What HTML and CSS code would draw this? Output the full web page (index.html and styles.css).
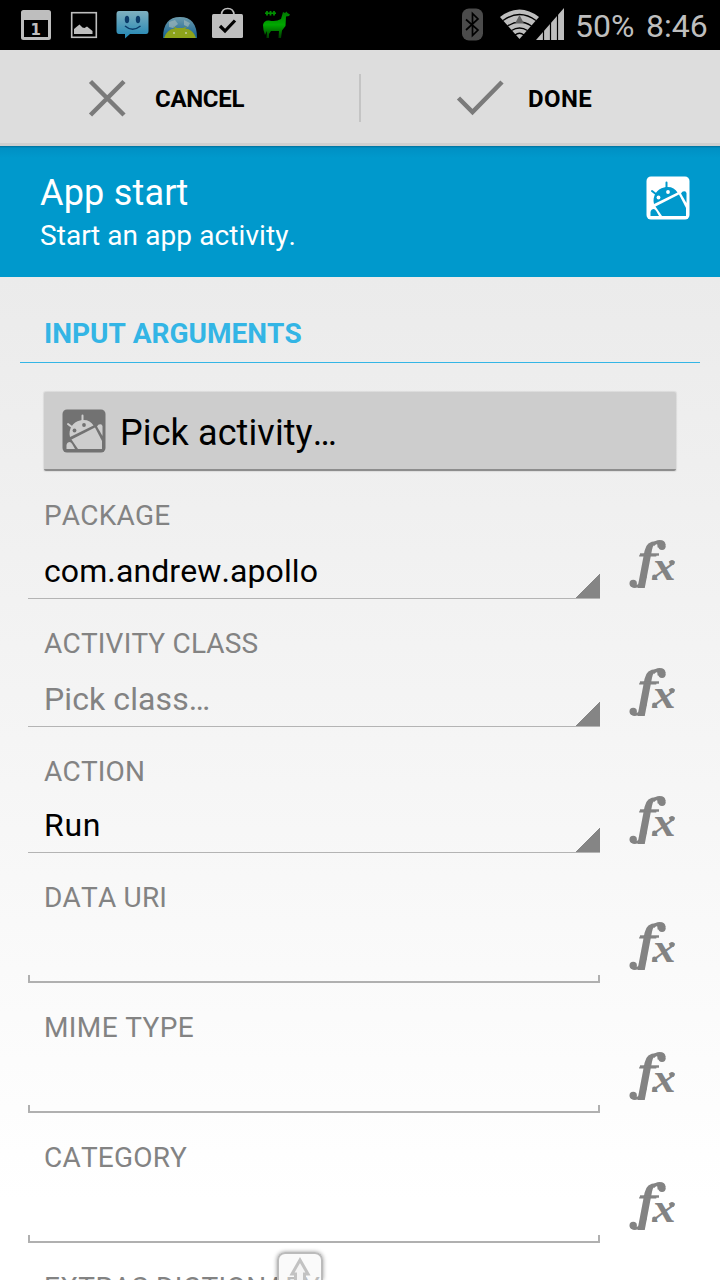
FILE: index.html
```
<!DOCTYPE html>
<html lang="en">
<head>
  <meta charset="UTF-8">
  <meta name="viewport" content="width=device-width, initial-scale=1">
  <title>App start</title>
  <link rel="stylesheet" href="styles.css">
</head>
<body>
  <svg width="0" height="0" class="defs">
    <defs>
      <linearGradient id="smileBlue" x1="0" y1="0" x2="0" y2="1">
        <stop offset="0" stop-color="#7fb0bf"/>
        <stop offset="1" stop-color="#2086b4"/>
      </linearGradient>
      <linearGradient id="llamaGreen" x1="0" y1="0" x2="0" y2="1">
        <stop offset="0" stop-color="#007800"/>
        <stop offset="0.5" stop-color="#00a800"/>
        <stop offset="1" stop-color="#003c00"/>
      </linearGradient>
      <linearGradient id="globe" x1="0" y1="0" x2="0" y2="1">
        <stop offset="0" stop-color="#6d9cad"/>
        <stop offset="1" stop-color="#125f91"/>
      </linearGradient>
    </defs>
    <symbol id="droid" viewBox="0 0 44 44">
      <rect x="0.500" y="0.500" width="43" height="43" rx="4.500" fill="var(--tile)"/>
      <g fill="var(--robot)" stroke="none">
        <path d="M8 28C6 20 11 13 18 11.500C24 10 29 12 31.500 16.500Z"/>
        <path d="M9.500 30.500L33 18.500L40 32V40H16Z"/>
        <path d="M4.500 40V36Q5 33 8 33Q9.500 33.500 10.500 35.500L13 40Z"/>
        <path d="M35 17.500Q36.500 14.500 39.500 15.500L40.500 17V27Z"/>
      </g>
      <path d="M6 15L10.500 18.500M20.500 6.500V12.500" stroke="var(--robot)" stroke-width="2" stroke-linecap="round"/>
      <circle cx="12.500" cy="21.500" r="1.900" fill="var(--tile)"/>
      <circle cx="22" cy="16" r="1.900" fill="var(--tile)"/>
    </symbol>
    <symbol id="fx" viewBox="0 0 48 52">
      <text class="fx-f" transform="translate(9.500 39) scale(1.080 1)">f</text>
      <text class="fx-x" transform="translate(24.500 41.500) scale(1.080 1)">x</text>
      <!-- hooks with ball ends on the f -->
      <path d="M12 16.500H31" stroke-width="2.400"/>
      <path d="M17.500 38Q14 48.500 7 48.500Q4 48.500 3.500 46" stroke-width="3"/>
      <path d="M25 7Q28 3.500 31.500 3.500Q36 3.500 36 7" stroke-width="3"/>
      <circle cx="5.200" cy="45.500" r="3.700"/>
      <circle cx="34" cy="8.300" r="3.700"/>
      <circle cx="44" cy="24.500" r="2.600"/>
      <circle cx="26.500" cy="39" r="2.400"/>
    </symbol>
  </svg>

  <header class="status">
    <div class="notifications">
      <svg width="300" height="50" viewBox="0 0 300 50">
        <!-- calendar -->
        <path d="M23.500 10H48.500Q51 10 51 12.500V37.500Q51 40 48.500 40H23.500Q21 40 21 37.500V12.500Q21 10 23.500 10ZM24 20V37H48V20Z" fill="#bebebe" fill-rule="evenodd"/>
        <text x="30.500" y="34.500" class="cal-day">1</text>
        <!-- picture -->
        <rect x="71.700" y="12.700" width="24.600" height="24.600" fill="none" stroke="#bebebe" stroke-width="1.600"/>
        <path d="M74 34V29L77 26.500L79.500 24.500L82.500 27.500L84.500 28L87 26.500L92.500 31V34Z" fill="#bebebe"/>
        <!-- smiley message -->
        <path d="M119 11H146Q148.500 11 148.500 14V31Q148.500 34 146 34H130L125 38.500V34H119Q116.500 34 116.500 31V14Q116.500 11 119 11Z" fill="url(#smileBlue)"/>
        <ellipse cx="127" cy="19.500" rx="2.200" ry="3.700" fill="#0b3b69"/>
        <ellipse cx="138" cy="19.500" rx="2.200" ry="3.700" fill="#0b3b69"/>
        <path d="M125 26Q132.500 32.500 140.500 26" fill="none" stroke="#0b3b69" stroke-width="1.400"/>
        <!-- globe with droid -->
        <path d="M163 38Q163 17 180 17Q197 17 197 38Z" fill="url(#globe)"/>
        <path d="M169 22L175 20L178 24L173 28L169 27ZM184 20L190 23L188 27L184 25Z" fill="#9bb5b9" opacity="0.700"/>
        <path d="M164 38Q167 29 175 28.500L173 26.500L177 28H183L187 26.500L185 28.500Q193 29 196 38Z" fill="#8da31b"/>
        <circle cx="174" cy="33" r="1" fill="#c5cfa0"/>
        <circle cx="186" cy="33" r="1" fill="#c5cfa0"/>
        <!-- shopping bag -->
        <path d="M221.500 15V14.500Q222 8.500 227.800 8.500Q233.500 8.500 234 14.500V15" fill="none" stroke="#bebebe" stroke-width="1.700"/>
        <rect x="212" y="14" width="31" height="24" rx="1.500" fill="#bebebe"/>
        <path d="M220 26L225 31L235 20.500" fill="none" stroke="#000" stroke-width="3.200"/>
        <!-- llama -->
        <path d="M265 13.200H276" stroke="#008f00" stroke-width="1.600"/>
        <path d="M267 11V15.500M270.500 11V15.500M274 11V15.500" stroke="#008f00" stroke-width="1.800"/>
        <path d="M283 12L285 13L286.500 11.500L287.500 13L290 14.500L289 16L286 16.500L285.500 26L282 30.500L281 38H278.500L279 31H271L269 34V38H266.500L267 31L265 35L263.500 30L263 25Q264 20 269 20.500Q276 22 281 19Z" fill="url(#llamaGreen)"/>
      </svg>
    </div>
    <div class="system">
      <svg width="110" height="50" viewBox="456 0 110 50">
        <!-- bluetooth -->
        <rect x="462" y="8.500" width="21" height="32" rx="7" fill="#4b4b4b"/>
        <path d="M466 19.500L478 30L472.500 35.500V13.500L478 19L466 30" fill="none" stroke="#000" stroke-width="1.700"/>
        <!-- wifi -->
        <path d="M500 17Q519.500 2 539 17L519.500 39Z" fill="#bebebe"/>
        <path d="M503 20.500Q519.500 8.500 536 20.500M507.500 26Q519.500 18 531.500 26M511.500 30.500Q519.500 25.500 527.500 30.500M515 35Q519.500 31.500 524 35" fill="none" stroke="#000" stroke-width="1.300"/>
        <path d="M519.500 15L524 23.500H515Z" fill="#626262"/>
        <!-- signal -->
        <path d="M536 40L564 8V40Z" fill="#bebebe"/>
        <path d="M543.500 25V40M550.500 18V40M557.500 10V40" stroke="#000" stroke-width="1.200"/>
      </svg>
      <span class="battery">50%</span>
      <span class="clock">8:46</span>
    </div>
  </header>

  <nav class="actions">
    <div class="action cancel">
      <svg width="38" height="38" viewBox="0 0 38 38">
        <path d="M2.500 2.500L36 36M36 2.500L2.500 36"/>
      </svg>
      <span>CANCEL</span>
    </div>
    <div class="divider"></div>
    <div class="action done">
      <svg width="48" height="38" viewBox="0 0 48 38">
        <path d="M2.500 19L16.500 33L46 3"/>
      </svg>
      <span>DONE</span>
    </div>
  </nav>

  <section class="banner">
    <div>
      <h1>App start</h1>
      <p>Start an app activity.</p>
    </div>
    <svg class="droid-white" width="44" height="44"><use href="#droid"/></svg>
  </section>

  <main>
    <h2>INPUT ARGUMENTS</h2>
    <div class="pick">
      <svg class="droid-gray" width="44" height="44"><use href="#droid"/></svg>
      <span>Pick activity…</span>
    </div>

    <div class="row">
      <div class="field">
        <label>PACKAGE</label>
        <div class="spinner">com.andrew.apollo</div>
      </div>
      <svg class="fx" width="48" height="52"><use href="#fx"/></svg>
    </div>
    <div class="row">
      <div class="field">
        <label>ACTIVITY CLASS</label>
        <div class="spinner hint">Pick class…</div>
      </div>
      <svg class="fx" width="48" height="52"><use href="#fx"/></svg>
    </div>
    <div class="row short">
      <div class="field">
        <label>ACTION</label>
        <div class="spinner">Run</div>
      </div>
      <svg class="fx" width="48" height="52"><use href="#fx"/></svg>
    </div>
    <div class="row tall">
      <div class="field">
        <label>DATA URI</label>
        <div class="edit"></div>
      </div>
      <svg class="fx" width="48" height="52"><use href="#fx"/></svg>
    </div>
    <div class="row tall">
      <div class="field">
        <label class="wide">MIME TYPE</label>
        <div class="edit"></div>
      </div>
      <svg class="fx" width="48" height="52"><use href="#fx"/></svg>
    </div>
    <div class="row tall">
      <div class="field">
        <label>CATEGORY</label>
        <div class="edit"></div>
      </div>
      <svg class="fx" width="48" height="52"><use href="#fx"/></svg>
    </div>
    <div class="row last">
      <div class="field">
        <label class="wide">EXTRAS DICTIONARY</label>
      </div>
    </div>
  </main>

  <div class="handle">
    <svg width="46" height="28" viewBox="0 0 46 28">
      <path d="M23 8L31 22H27.500V34H18.500V22H15Z" fill="#f4f4f4" stroke="#c2c2c2" stroke-width="3"/>
    </svg>
  </div>
</body>
</html>
```
FILE: styles.css
```
* {
  box-sizing: border-box;
}
body {
  margin: 0;
  width: 720px;
  height: 1280px;
  overflow: hidden;
  position: relative;
  font-family: Roboto, sans-serif;
  font-kerning: none;
  color: #000;
  background: linear-gradient(#ebebeb 277px, #fff 1200px);
}
svg {
  display: block;
  flex: none;
}
.defs {
  position: absolute;
}

/* status bar */
.status {
  height: 50px;
  background: #000;
  color: #bebebe;
  display: flex;
  justify-content: space-between;
}
.cal-day {
  font: bold 15px "DejaVu Sans", sans-serif;
  fill: #bebebe;
}
.system {
  display: flex;
  width: 264px;
  font-size: 32px;
  line-height: 53px;
  white-space: nowrap;
}
.battery {
  width: 71px;
  margin-left: 9px;
}

/* cancel / done */
.actions {
  height: 96px;
  display: flex;
  align-items: center;
  background: #ddd;
  border-bottom: 3px solid #cfcfcf;
  font-size: 24px;
  font-weight: bold;
}
.action {
  display: flex;
  align-items: center;
  width: 359px;
  padding-top: 3px;
}
.action span {
  padding-top: 2px;
}
.action path {
  fill: none;
  stroke: #7a7a7a;
  stroke-width: 4.5;
}
.cancel {
  padding-left: 88px;
  gap: 29px;
  letter-spacing: -0.3px;
}
.done {
  padding-left: 95px;
  gap: 24px;
  letter-spacing: 0.4px;
}
.divider {
  width: 2px;
  height: 48px;
  margin-top: 3px;
  background: #c4c4c4;
}

.banner {
  height: 131px;
  padding: 25px 30px 0 40px;
  display: flex;
  justify-content: space-between;
  align-items: flex-start;
  color: #fff;
  background: linear-gradient(#006f9a 0, #0090c4 2px, #0099cc 12px);
}
.banner h1 {
  margin: 0;
  font-size: 36px;
  font-weight: normal;
  line-height: 45px;
  letter-spacing: 0.2px;
}
.banner p {
  margin: 0;
  font-size: 28px;
  line-height: 40px;
  letter-spacing: 0.1px;
}
.droid-white {
  --tile: #fff;
  --robot: #0099cc;
  margin-top: 5px;
}
.droid-gray {
  --tile: #727272;
  --robot: #cdcdcd;
}

h2 {
  margin: 0 20px;
  padding: 37px 24px 0;
  height: 86px;
  border-bottom: 1px solid #33b5e5;
  color: #33b5e5;
  font-size: 28px;
  line-height: 40px;
}
.pick {
  margin: 29px 44px 0;
  height: 79px;
  padding-left: 18px;
  display: flex;
  align-items: center;
  gap: 14px;
  background: #cdcdcd;
  border-bottom: 2px solid #8d8d8d;
  border-radius: 2px;
  box-shadow: 0 0 1px 1px rgba(0, 0, 0, 0.08);
  font-size: 36px;
  letter-spacing: 0.1px;
}
.pick span {
  padding-top: 4px;
}

/* argument rows */
.row {
  height: 128px;
  padding-left: 28px;
  display: flex;
  gap: 28px;
}
.pick + .row {
  margin-top: 28px;
}
.row.short {
  height: 126px;
}
.row.tall {
  height: 130px;
}
.row.last {
  height: 9px;
  overflow: hidden;
}
.field {
  width: 572px;
}
label {
  display: block;
  padding-left: 16px;
  height: 32px;
  line-height: 33px;
  font-size: 28px;
  letter-spacing: 0.2px;
  color: #838383;
}
label.wide {
  letter-spacing: 0.4px;
}
.spinner {
  height: 68px;
  padding-left: 16px;
  font-size: 32px;
  line-height: 80px;
  letter-spacing: 0.1px;
  border-bottom: 1px solid #b4b4b4;
  background: linear-gradient(135deg, transparent 50%, #858585 50%) right bottom / 24px 24px no-repeat;
}
.short .spinner {
  height: 66px;
  line-height: 76px;
  letter-spacing: 0.7px;
}
.hint {
  color: #838383;
}
.edit {
  height: 8px;
  margin-top: 62px;
  border: solid #b0b0b0;
  border-width: 0 2px 2px;
}
.fx {
  margin-top: 39px;
  fill: #838383;
}
#fx path {
  fill: none;
  stroke: #838383;
}
.fx-f {
  font: italic bold 51px "Liberation Serif", serif;
}
.fx-x {
  font: italic bold 43px "Liberation Serif", serif;
}

/* only the top part of the handle is on screen */
.handle {
  position: absolute;
  left: 277px;
  top: 1252px;
  width: 46px;
  height: 28px;
  border: 2px solid #bbb;
  border-bottom: none;
  border-radius: 8px 8px 0 0;
  background: rgba(245, 245, 245, 0.5);
  box-shadow: 0 0 4px rgba(0, 0, 0, 0.4);
}
.handle svg {
  margin: -2px;
}
```
